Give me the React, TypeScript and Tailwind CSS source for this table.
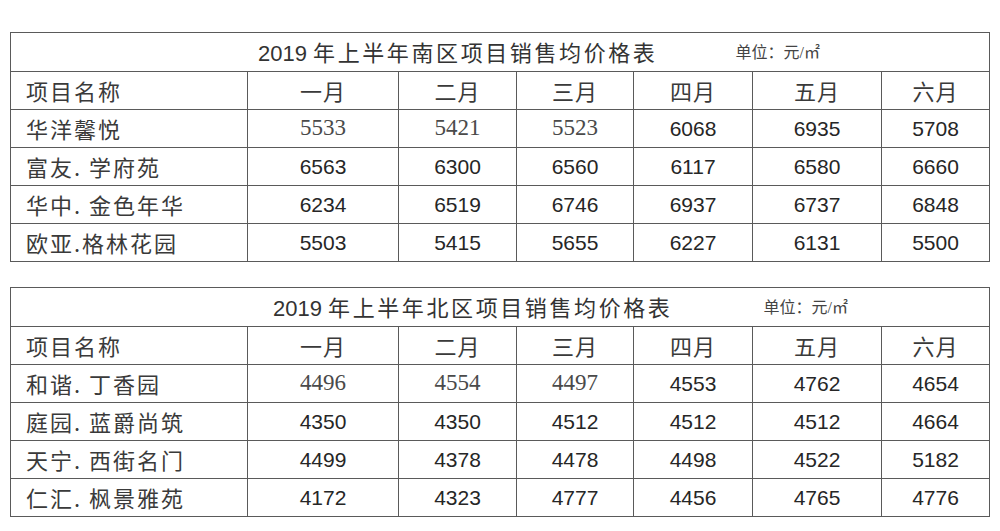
import React from 'react'

interface Row {
  name: string
  values: number[]
}

interface PriceTable {
  title: string
  titleLeft: string
  unitGap: string
  rows: Row[]
}

const months = ['一月', '二月', '三月', '四月', '五月', '六月']

// first row of each table is set in a serif face in the source, only the first three months
const tables: PriceTable[] = [
  {
    title: '南区',
    titleLeft: 'pl-[247px]',
    unitGap: 'ml-[78px]',
    rows: [
      { name: '华洋馨悦', values: [5533, 5421, 5523, 6068, 6935, 5708] },
      { name: '富友. 学府苑', values: [6563, 6300, 6560, 6117, 6580, 6660] },
      { name: '华中. 金色年华', values: [6234, 6519, 6746, 6937, 6737, 6848] },
      { name: '欧亚.格林花园', values: [5503, 5415, 5655, 6227, 6131, 5500] },
    ],
  },
  {
    title: '北区',
    titleLeft: 'pl-[262px]',
    unitGap: 'ml-[91px]',
    rows: [
      { name: '和谐. 丁香园', values: [4496, 4554, 4497, 4553, 4762, 4654] },
      { name: '庭园. 蓝爵尚筑', values: [4350, 4350, 4512, 4512, 4512, 4664] },
      { name: '天宁. 西街名门', values: [4499, 4378, 4478, 4498, 4522, 5182] },
      { name: '仁汇. 枫景雅苑', values: [4172, 4323, 4777, 4456, 4765, 4776] },
    ],
  },
]

const cjk = "font-['Noto_Sans_CJK_SC',sans-serif]"
const sansNum = "font-['Liberation_Sans',Arial,sans-serif]"
const serifNum = "font-['Liberation_Serif','Times_New_Roman',serif]"

function Table({ table }: { table: PriceTable }) {
  return (
    <table className="w-[979px] table-fixed border-collapse border border-[#5a5a5a] text-[#2b2b2b]">
      <colgroup>
        <col className="w-[237px]" />
        <col className="w-[151px]" />
        <col className="w-[118px]" />
        <col className="w-[117px]" />
        <col className="w-[119px]" />
        <col className="w-[129px]" />
        <col className="w-[108px]" />
      </colgroup>
      <tbody>
        <tr className="h-[39px]">
          <td colSpan={7} className="border border-[#5a5a5a] p-0">
            <div className={`flex items-center ${table.titleLeft}`}>
              <span className={`${cjk} text-[22px] text-[#333]`}>
                <span className={sansNum}>2019 </span>
                <span className="tracking-[2.6px]">年上半年{table.title}项目销售均价格表</span>
              </span>
              <span className={`${cjk} ${table.unitGap} text-[16px] text-[#444]`}>
                单位：元<span className={serifNum}>/</span>㎡
              </span>
            </div>
          </td>
        </tr>
        <tr className="h-[38px]">
          <td className={`border border-[#5a5a5a] pl-[15px] ${cjk} text-[22px] tracking-[2px] text-[#3a3a3a]`}>
            项目名称
          </td>
          {months.map((m) => (
            <td key={m} className={`border border-[#5a5a5a] text-center ${cjk} text-[22px] tracking-[1px] text-[#3a3a3a]`}>
              {m}
            </td>
          ))}
        </tr>
        {table.rows.map((row, ri) => (
          <tr key={row.name} className="h-[38px]">
            <td className={`border border-[#5a5a5a] pl-[15px] ${cjk} text-[22px] tracking-[2px] whitespace-nowrap text-[#3a3a3a]`}>
              {row.name}
            </td>
            {row.values.map((v, ci) =>
              ri === 0 && ci < 3 ? (
                <td key={ci} className={`border border-[#5a5a5a] text-center ${serifNum} text-[23px] text-[#4a4a4a]`}>
                  {v}
                </td>
              ) : (
                <td key={ci} className={`border border-[#5a5a5a] text-center ${sansNum} text-[21px] text-[#262626]`}>
                  {v}
                </td>
              )
            )}
          </tr>
        ))}
      </tbody>
    </table>
  )
}

export default function App() {
  return (
    <div className="h-[531px] w-[1000px] overflow-hidden bg-white pl-[10px] pt-[32px]">
      <div className="flex flex-col gap-[25px]">
        {tables.map((t) => (
          <Table key={t.title} table={t} />
        ))}
      </div>
    </div>
  )
}
